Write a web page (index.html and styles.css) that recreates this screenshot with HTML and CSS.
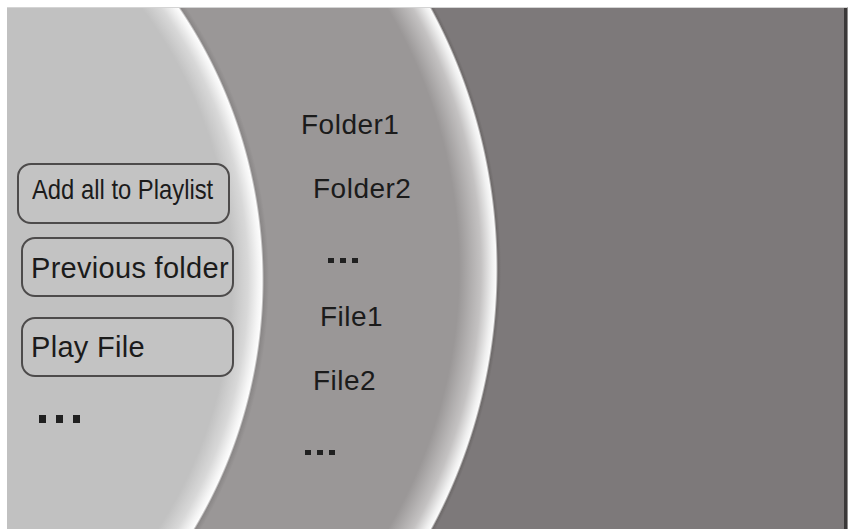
FILE: index.html
```html
<!DOCTYPE html>
<html lang="en">
<head>
    <meta charset="UTF-8">
    <meta name="viewport" content="width=device-width, initial-scale=1.0">
    <title>Media Browser</title>
    <link rel="stylesheet" href="styles.css">
</head>
<body>
    <div class="screen">
        <!-- Action menu on the inner ring -->
        <nav class="actions">
            <button class="action action-first"><span class="narrow">Add all to Playlist</span></button>
            <button class="action action-prev">Previous folder</button>
            <button class="action action-play">Play File</button>
            <div class="more more-menu"><i></i><i></i><i></i></div>
        </nav>

        <!-- Folder / file list on the middle ring -->
        <ul class="entries">
            <li class="entry">Folder1</li>
            <li class="entry">Folder2</li>
            <li class="entry"><div class="more more-list"><i></i><i></i><i></i></div></li>
            <li class="entry">File1</li>
            <li class="entry">File2</li>
            <li class="entry"><div class="more more-list"><i></i><i></i><i></i></div></li>
        </ul>
    </div>
</body>
</html>
```

FILE: styles.css
```css
* {
    margin: 0;
    padding: 0;
    box-sizing: border-box;
}

body {
    background: #ffffff;
    font-family: "Liberation Sans", Arial, sans-serif;
    color: #1b1b1b;
    overflow: hidden;
}

/* Three panels: two curved rings over the dark right area */
.screen {
    margin: 7px 0 0 7px;
    width: 841px;
    height: 522px;
    display: flex;
    border-top: 1px solid #d4d4d4;
    border-right: 1px solid #8e8c8c;
    box-shadow: inset -3px 0 #3a3838;
    background:
        radial-gradient(circle 486px at -229px 272px,
            #c1c1c1 454px, #d8d8d8 470px, #f4f4f4 480px, #fdfdfd 484px,
            #8a8787 486px, rgba(138, 135, 135, 0) 491px),
        radial-gradient(circle 549px at -58px 261px,
            #9a9797 510px, #c4c2c2 532px, #efefef 543px, #fbfbfb 547px,
            #6e6a6a 549px, rgba(110, 106, 106, 0) 552px),
        #7d797a;
}

.actions {
    width: 293px;
    padding: 155px 0 0 10px;
    display: flex;
    flex-direction: column;
    align-items: flex-start;
}

.action {
    width: 213px;
    height: 60px;
    padding: 0 0 0 8px;
    border: 2px solid #4d4b4b;
    border-radius: 14px;
    background: #c3c3c3;
    font-family: inherit;
    font-size: 29px;
    letter-spacing: 0.3px;
    color: #1b1b1b;
    text-align: left;
    white-space: nowrap;
    display: flex;
    align-items: center;
}

.action-first {
    height: 61px;
    padding: 0 0 7px 13px;
    font-size: 28px;
    letter-spacing: 0;
}

.narrow {
    display: inline-block;
    transform: scaleX(0.85);
    transform-origin: left center;
}

.action-prev {
    margin: 13px 0 0 4px;
    padding-top: 3px;
}

.action-play {
    margin: 20px 0 0 4px;
}

/* "more items" marker: three small squares */
.more {
    display: flex;
}

.more i {
    display: block;
    background: #202020;
}

.more-menu {
    margin: 38px 0 0 22px;
    gap: 10px;
}

.more-menu i {
    width: 7px;
    height: 8px;
}

.more-list {
    padding-top: 21px;
    gap: 6px;
}

.more-list i {
    width: 6px;
    height: 5px;
}

.entries {
    list-style: none;
    padding-top: 101px;
}

.entry {
    height: 64px;
    font-size: 28px;
    line-height: 32px;
    letter-spacing: 0.5px;
}

.entry:nth-child(1) { margin-left: 1px; }
.entry:nth-child(2) { margin-left: 13px; }
.entry:nth-child(3) { margin-left: 28px; }
.entry:nth-child(4) { margin-left: 20px; }
.entry:nth-child(5) { margin-left: 13px; }
.entry:nth-child(6) { margin-left: 5px; }
```
